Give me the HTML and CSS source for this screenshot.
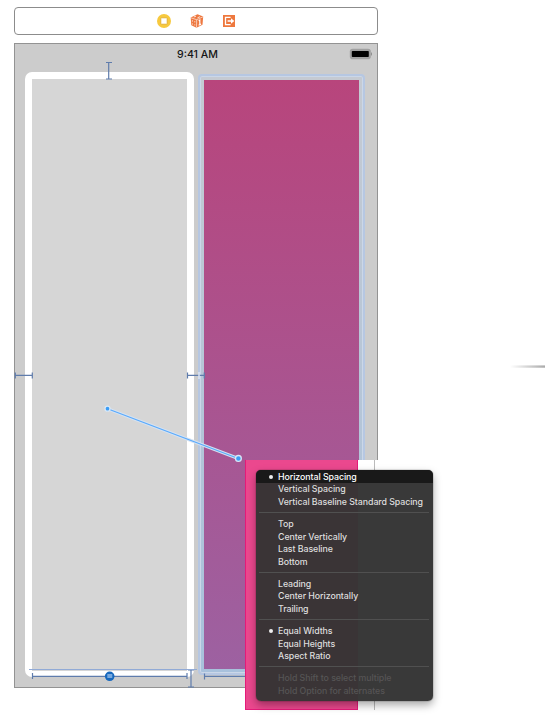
FILE: index.html
```html
<!DOCTYPE html>
<html lang="en">
<head>
<meta charset="utf-8">
<title>Interface Builder</title>
<link rel="stylesheet" href="styles.css">
</head>
<body>
<main class="canvas">
  <header class="scene-dock">
    <svg class="dock-icon" viewBox="0 0 14 14"><circle cx="7" cy="7" r="7" fill="#f7c93e"/><rect x="3.8" y="3.8" width="6.4" height="6.4" rx=".6" fill="#fff" stroke="#dda725" stroke-width=".8"/></svg>
    <svg class="dock-icon" viewBox="0 0 14 14"><path d="M.7 3.5 7.5.3 13.2 2.5 12.5 10.8 6.5 13.7 1.3 11.2Z" fill="#ee7840"/><path d="M.9 3.8 6.7 5.7 13 2.8M6.7 5.7 6.5 13.4" fill="none" stroke="#fff" stroke-width=".6"/><path d="M3.8 3 6 2.2M7.5 3.8 10 2.7M2.4 6.3v1.3M4.8 7.2v1.2M2.5 9.5v1M4.8 10.4v1" stroke="#fff" stroke-width=".8"/><path d="m8.7 6.7 1.1-.7v4.7M8.6 11.2l2.5-1.1" fill="none" stroke="#fff" stroke-width="1.2"/></svg>
    <svg class="dock-icon" viewBox="0 0 14 14"><path d="M1 1h12v12H1Z" fill="#ee783e"/><path d="M8.6 3.3H3.5v7.4h5.1M5.6 7h4" fill="none" stroke="#fff" stroke-width="1.3"/><path d="m9 4.3 3.3 2.7L9 9.7Z" fill="#fff"/></svg>
  </header>

  <section class="device">
    <div class="status-bar">
      <span class="clock">9:41 AM</span>
      <svg class="battery" viewBox="0 0 24 12"><rect x=".8" y=".8" width="21" height="10.4" rx="2.8" fill="#a0a0a0"/><path d="M22 4q2 2 0 4Z" fill="#888"/><rect x="2.8" y="3" width="17" height="6" rx=".8" fill="#000"/></svg>
    </div>
    <div class="columns">
      <div class="view view-source"></div>
      <div class="view view-target"></div>
    </div>
  </section>

  <svg class="constraints" viewBox="0 0 545 720">
    <g class="guide">
      <path d="M108.7 62.5V79M106 62.5h6M106 79h6"/>
      <path d="M15 375.3H32M15.3 372.5v6M32.3 372.5v6"/>
      <path d="M187.5 375.3H204M187.5 372.5v6M204.3 372.5v6"/>
      <path d="M32.5 676.3H187M32.5 673v6M187 673v6"/>
      <path d="M191 670V687M188 670h6M188 687h6"/>
      <path d="M204.5 676.3H245M204.5 673.5v6"/>
    </g>
    <path class="baseline" d="M29 669.5H197"/>
    <path d="M199 372v7" stroke="#dbe5f5" stroke-width="1.5"/>
    <circle cx="109.7" cy="676.3" r="4.8" fill="#1768bd"/>
    <path d="M107.3 675h5M107.3 677h5" stroke="#dbeaff" stroke-width="1.2"/>
  </svg>

  <div class="snapshot"></div>

  <svg class="connection" viewBox="0 0 545 720">
    <path d="M107.5 408.7 238.3 458.4" stroke="#d5e2f1" stroke-width="3.2"/>
    <path d="M107.5 408.7 238.3 458.4" stroke="#58a9fc" stroke-width="1.1"/>
    <g fill="#3b9df6" stroke="#d8e8f7" stroke-width="1.3"><circle cx="107.5" cy="408.7" r="2.5"/><circle cx="238.4" cy="458.4" r="2.9"/></g>
  </svg>

  <div class="side-rule"></div>

  <nav class="menu">
    <ul>
      <li class="selected checked"><span>Horizontal Spacing</span></li>
      <li><span>Vertical Spacing</span></li>
      <li><span>Vertical Baseline Standard Spacing</span></li>
    </ul>
    <ul>
      <li><span>Top</span></li>
      <li><span>Center Vertically</span></li>
      <li><span>Last Baseline</span></li>
      <li><span>Bottom</span></li>
    </ul>
    <ul>
      <li><span>Leading</span></li>
      <li><span>Center Horizontally</span></li>
      <li><span>Trailing</span></li>
    </ul>
    <ul>
      <li class="checked"><span>Equal Widths</span></li>
      <li><span>Equal Heights</span></li>
      <li><span>Aspect Ratio</span></li>
    </ul>
    <ul class="hints">
      <li><span>Hold Shift to select multiple</span></li>
      <li><span>Hold Option for alternates</span></li>
    </ul>
  </nav>
</main>
</body>
</html>
```
FILE: styles.css
```css
* { box-sizing: border-box; }
body { margin: 0; background: #fff; font-family: Inter, "Liberation Sans", sans-serif; }
.canvas { position: relative; width: 545px; height: 720px; padding: 7px 0 0 14px; overflow: hidden; }
.scene-dock {
  display: flex; align-items: center; justify-content: center; gap: 18.5px;
  width: 364px; height: 28px; padding-left: 1px; border: 1px solid #8c8c8c; border-radius: 4px; background: #fff;
}
.dock-icon { width: 14px; height: 14px; }
.device {
  display: flex; flex-direction: column;
  width: 364px; height: 645px; margin-top: 8px;
  border: 1px solid #939393; background: #ccc;
}
.status-bar { display: flex; justify-content: center; align-items: center; height: 20px; padding-left: 3px; position: relative; }
.clock { font-size: 10.6px; font-weight: 500; color: #151515; }
.battery { position: absolute; right: 4px; top: 3.5px; width: 24px; height: 12px; }
.columns { display: flex; gap: 4px; margin: 8px 0 0 10px; height: 605px; }
.view { height: 605px; }
.view-source { width: 169px; border: 7px solid #fff; border-bottom-width: 6px; border-radius: 7px; background: #d6d6d6; }
.view-target {
  width: 167px; height: 601px; margin-top: 2px; padding: 4px;
  border: 2px solid #b6c7e2; border-radius: 4px;
  background: linear-gradient(#b8457c, #9d61a1) content-box, linear-gradient(#c5cad2, #a8c1dc) padding-box;
  box-shadow: inset 0 0 0 1px #cbd7e8;
}
.constraints, .connection { position: absolute; left: 0; top: 0; width: 545px; height: 720px; fill: none; }
.guide { stroke: #5f7cac; stroke-width: 1.2; }
.baseline { stroke: #91aad6; stroke-width: 1; }
.snapshot {
  position: absolute; left: 245px; top: 460px; width: 134px; height: 250px;
  background:
    linear-gradient(#bbb, #bbb) 129px 0 / 1px 250px no-repeat,
    linear-gradient(#e41b79, #e41b79) 112px 0 / 1px 250px no-repeat,
    linear-gradient(#e41b79, #e41b79) 0 249px / 113px 1px no-repeat,
    linear-gradient(#e41b79, #e41b79) 0 0 / 1px 250px no-repeat,
    linear-gradient(#eb488e, #eb488e) 0 0 / 113px 250px no-repeat,
    #fff;
}
.side-rule {
  position: absolute; left: 510px; top: 365px; width: 35px; height: 3px;
  background: linear-gradient(#ddd, #aaa, #ccc);
  mask-image: linear-gradient(to right, transparent, #000);
}
.menu {
  position: absolute; left: 256px; top: 470px; width: 177px; height: 231px;
  padding-bottom: 4px; border-radius: 5px; overflow: hidden;
  background: linear-gradient(to right, #3a3436 0 102px, #393939 102px);
  box-shadow: 0 0 1px #000, 0 4px 9px rgba(0, 0, 0, .35);
  color: #dedede; font-size: 8.8px; font-weight: 500; letter-spacing: -.06px;
}
.menu ul { list-style: none; margin: 0; padding: 0; }
.menu ul + ul { padding-top: 9.4px; background: linear-gradient(#505050, #505050) 3px 4px / 170px 1px no-repeat; }
.menu li { display: flex; align-items: center; height: 12.6px; padding: 1px 0 0 22px; line-height: 12px; white-space: nowrap; position: relative; }
.menu .selected { background: #191919; color: #fff; }
.checked::before { content: ""; position: absolute; left: 13px; top: 4.5px; width: 4px; height: 4px; border-radius: 50%; background: #eee; }
.menu .hints { color: #565455; }
```
